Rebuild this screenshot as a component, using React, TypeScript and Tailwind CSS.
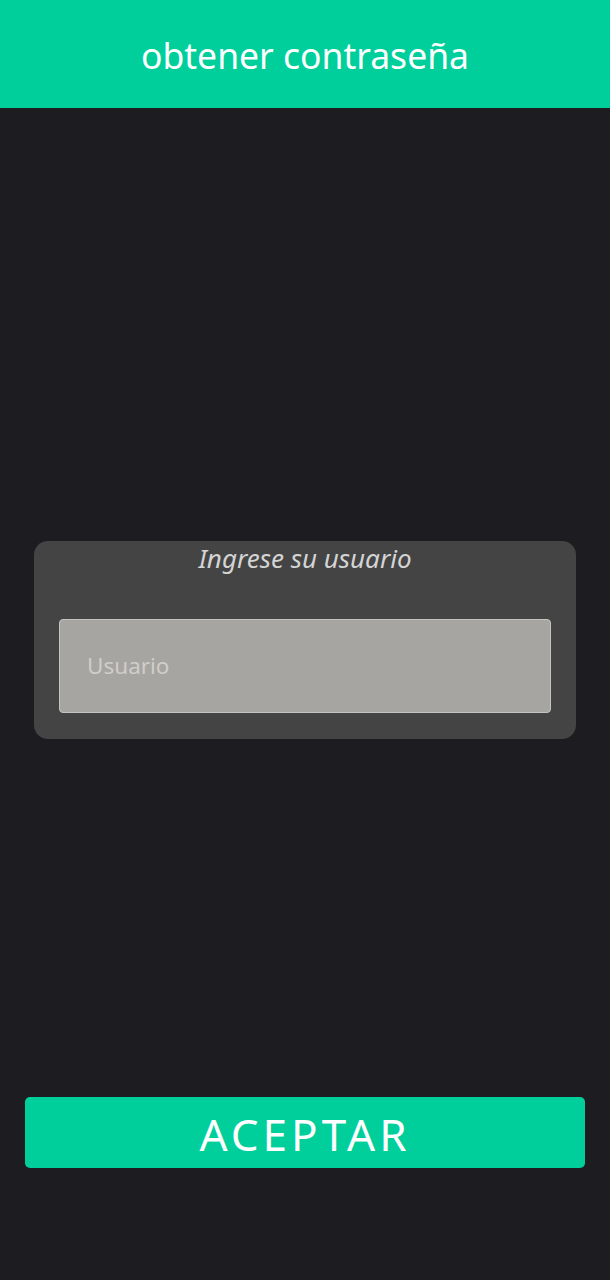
export default function App() {
  return (
    <div className="flex min-h-[1280px] w-full flex-col bg-[#1d1c21]" style={{ fontFamily: '"Noto Sans", "Open Sans", sans-serif' }}>
      <div className="flex h-[108px] items-center justify-center bg-[#00cf9c]">
        <span className="pt-[4px] text-[35.5px] leading-none text-white">obtener contraseña</span>
      </div>
      <div className="mx-[34px] mt-[433px] flex h-[198px] flex-col items-center rounded-[14px] bg-[#444444] px-[25px]">
        <span className="mt-[1px] text-[26px] italic leading-[32px] text-[#d4d4d4]">Ingrese su usuario</span>
        <div className="mt-[45px] flex h-[94px] w-full items-center rounded-[4px] border border-[#c4c4c0] bg-[#a6a5a1] pl-[27px]">
          <span className="text-[22.5px] leading-none text-[#cfcec9]">Usuario</span>
        </div>
      </div>
      <div className="mx-[25px] mt-[358px] flex h-[71px] items-center justify-center rounded-[5px] bg-[#00cf9c]">
        <span className="pt-[3px] text-[44px] leading-none tracking-[4px] text-white">ACEPTAR</span>
      </div>
    </div>
  );
}
